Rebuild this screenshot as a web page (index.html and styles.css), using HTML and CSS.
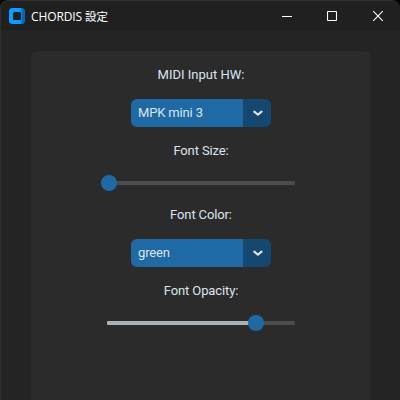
FILE: index.html
```
<!DOCTYPE html>
<html lang="ja">
<head>
<meta charset="utf-8">
<title>CHORDIS 設定</title>
<link rel="stylesheet" href="styles.css">
</head>
<body>
<div class="window">
  <header class="titlebar">
    <svg class="logo" width="16" height="16" viewBox="0 0 16 16">
      <defs><linearGradient id="g"><stop offset=".7" stop-color="#0a9cff"/><stop offset=".85" stop-color="#0668b8"/></linearGradient></defs>
      <rect width="16" height="16" rx="3.5" fill="url(#g)"/>
      <rect x="4" y="4" width="8" height="8" rx="1.5" fill="#202020"/>
    </svg>
    <h1 class="title">CHORDIS <span class="cjk">設定</span></h1>
    <div class="controls">
      <svg width="46" height="29" viewBox="0 0 46 29"><path d="M18 14.5h10"/></svg>
      <svg width="46" height="29" viewBox="0 0 46 29"><rect x="17.5" y="9.5" width="9" height="9" rx=".5"/></svg>
      <svg width="46" height="29" viewBox="0 0 46 29"><path d="M17.2 9.2l9.6 9.6M26.8 9.2l-9.6 9.6"/></svg>
    </div>
  </header>
  <main class="panel">
    <div class="label">MIDI Input HW:</div>
    <div class="select"><span class="value">MPK mini 3</span><span class="drop"><svg width="10" height="6" viewBox="0 0 10 6"><path d="M1.3 1.6L4.9 4.7l3.6-3.1"/></svg></span></div>
    <div class="label label-tight">Font Size:</div>
    <div class="slider"><div class="track"></div><div class="knob knob-size"></div></div>
    <div class="label label-tight">Font Color:</div>
    <div class="select"><span class="value">green</span><span class="drop"><svg width="10" height="6" viewBox="0 0 10 6"><path d="M1.3 1.6L4.9 4.7l3.6-3.1"/></svg></span></div>
    <div class="label label-tight">Font Opacity:</div>
    <div class="slider"><div class="track"><div class="fill"></div></div><div class="knob knob-opacity"></div></div>
  </main>
</div>
</body>
</html>
```
FILE: styles.css
```
* { box-sizing: border-box; }
body { margin: 0; background: #000; overflow: hidden; }
.window {
  width: 400px;
  height: 400px;
  display: flex;
  flex-direction: column;
  background: #242424;
  border: 1px solid #303030;
  border-right: 0;
  border-bottom: 0;
  border-radius: 8px 8px 0 0;
  overflow: hidden;
  font-family: Roboto, "Noto Sans CJK JP", sans-serif;
}
.titlebar {
  height: 30px;
  flex: none;
  display: flex;
  align-items: center;
  padding-left: 8px;
  background: #202020;
}
.title {
  margin: 0 0 0 6px;
  font: 12px/16px "Open Sans", "Noto Sans CJK JP", sans-serif;
  letter-spacing: -0.1px;
  color: #fff;
  white-space: nowrap;
}
.cjk { font-size: 11.5px; font-family: "Noto Sans CJK JP", sans-serif; }
.controls { margin-left: auto; margin-right: -2px; display: flex; }
.controls svg { flex: none; fill: none; stroke: #fff; stroke-width: 1.1; }
.panel {
  flex: 1;
  margin: 20px 29px 0 30px;
  padding-top: 10px;
  display: flex;
  flex-direction: column;
  align-items: center;
  gap: 10px;
  background: #2b2b2b;
  border-radius: 6px 6px 0 0;
}
.label { font-size: 13px; line-height: 28px; height: 28px; color: #dce4ee; }
.label-tight { letter-spacing: -0.12px; }
.select {
  display: flex;
  width: 140px;
  height: 28px;
  border-radius: 6px;
  overflow: hidden;
}
.value { width: 112px; padding-left: 7px; background: #1f6aa5; color: #dce4ee; font-size: 13px; line-height: 28px; letter-spacing: -0.15px; }
.drop { flex: 1; display: flex; align-items: center; justify-content: center; padding-left: 1px; background: #144870; }
.drop svg { fill: none; stroke: #dce4ee; stroke-width: 2.1; stroke-linecap: round; stroke-linejoin: round; }
.slider { position: relative; width: 200px; height: 16px; padding: 6px; }
.track { height: 4px; border-radius: 1px; background: #4a4d50; overflow: hidden; }
.fill { width: 149px; height: 4px; background: #aab0b5; }
.knob { position: absolute; top: 0; width: 16px; height: 16px; border-radius: 50%; background: #1f6aa5; }
.knob-size { left: 0; }
.knob-opacity { left: 147px; }
```
